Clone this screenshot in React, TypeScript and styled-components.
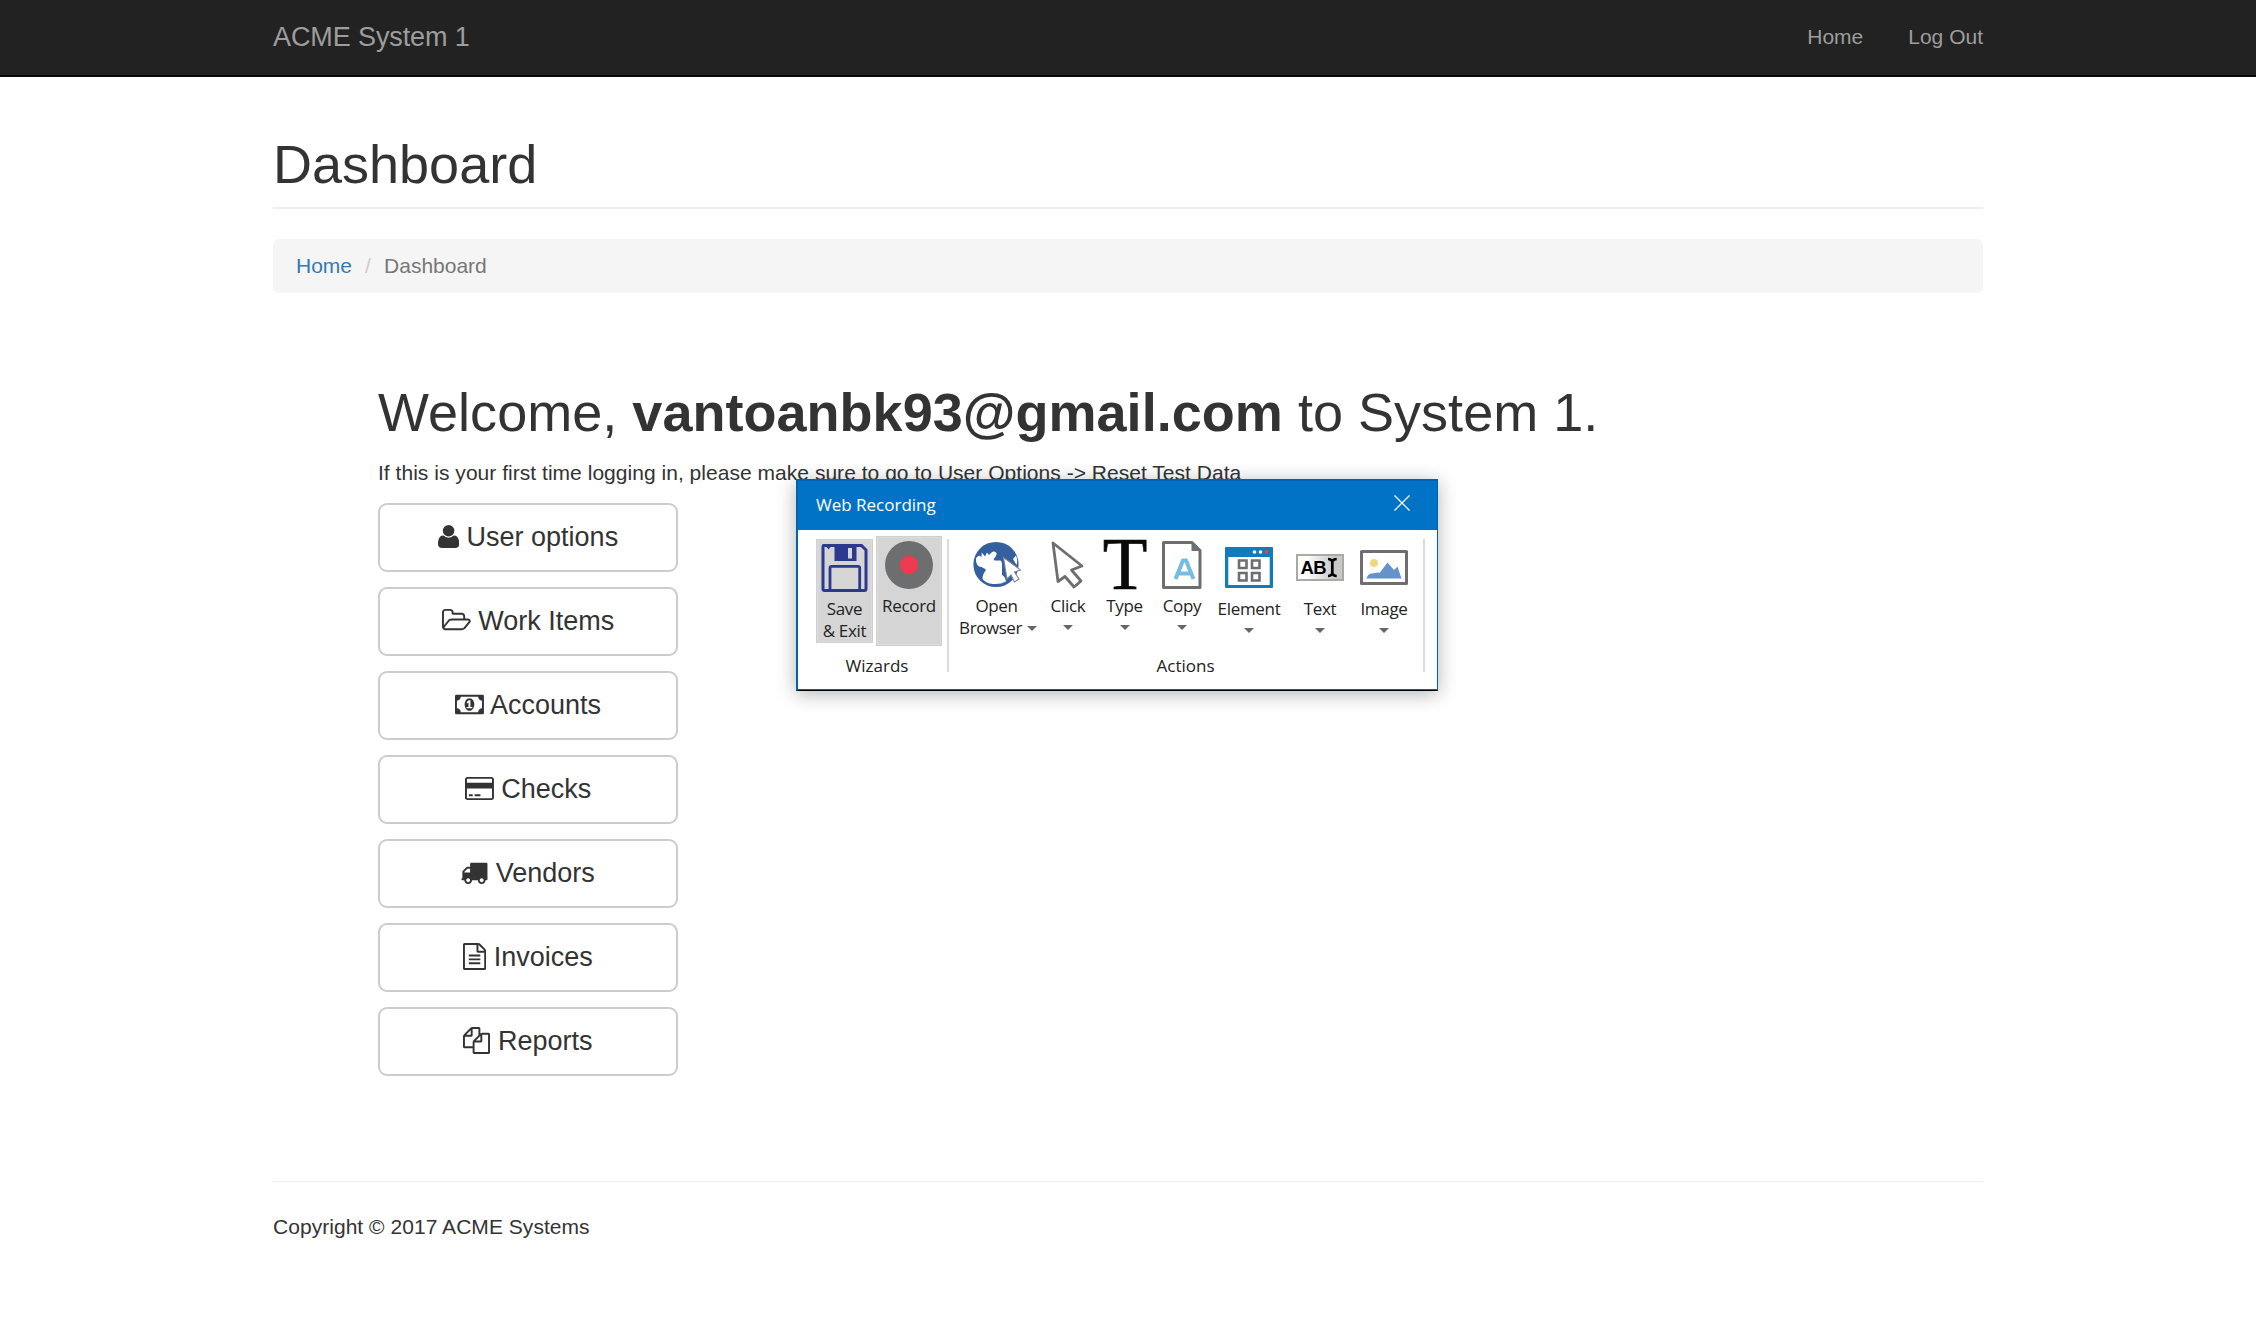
import React from "react";
import styled, { createGlobalStyle } from "styled-components";

const GlobalStyle = createGlobalStyle`
  * { box-sizing: border-box; }
  body {
    margin: 0;
    background: #fff;
    color: #333;
    font-family: "Liberation Sans", Arial, sans-serif;
    font-size: 21px;
    line-height: 30px;
  }
  a { text-decoration: none; color: inherit; }
`;

const Page = styled.div`
  position: relative;
  min-height: 1334px;
  overflow: hidden;
`;

const Container = styled.div`
  width: 1710px;
  margin: 0 auto;
`;

const Navbar = styled.nav`
  height: 77px;
  background: #222;
  border-bottom: 2px solid #080808;
  color: #9d9d9d;
`;

const NavInner = styled(Container)`
  display: flex;
  justify-content: space-between;
  height: 75px;
  padding-top: 22px;
`;

const Brand = styled.a`
  font-size: 27px;
  letter-spacing: -0.1px;
`;

const NavLinks = styled.div`
  display: flex;
  gap: 45px;
`;

const PageTitle = styled.h1`
  height: 75px;
  margin: 57px 0 30px;
  padding: 0 0 13px;
  font-size: 54px;
  font-weight: 400;
  line-height: 60px;
  border-bottom: 2px solid #eee;
`;

const Breadcrumb = styled.ol`
  display: flex;
  align-items: center;
  height: 54px;
  margin: 0;
  padding: 0 23px;
  list-style: none;
  background: #f5f5f5;
  border-radius: 6px;
`;

const Crumb = styled.li<{ $active?: boolean }>`
  color: ${(p) => (p.$active ? "#777" : "#337ab7")};
`;

const Slash = styled.li`
  width: 32px;
  padding-left: 13px;
  color: #ccc;
`;

const Main = styled.main`
  padding: 89px 105px 0;
`;

const Welcome = styled.h1`
  margin: 0;
  font-size: 54px;
  font-weight: 400;
  line-height: 60px;
  letter-spacing: 0.03px;
`;

const Hint = styled.p`
  height: 30px;
  margin: 16px 0 15px;
  letter-spacing: 0.03px;
`;

const Menu = styled.div`
  display: flex;
  flex-direction: column;
  gap: 15px;
  width: 300px;
`;

const MenuButton = styled.a`
  height: 69px;
  padding: 14px 0;
  border: 2px solid #ccc;
  border-radius: 9px;
  font-size: 27px;
  line-height: 36px;
  text-align: center;
`;

const Glyph = styled.svg`
  height: 27px;
  vertical-align: -4px;
  fill: currentColor;
`;

const Footer = styled.footer`
  margin-top: 105px;
  padding-top: 30px;
  border-top: 1px solid #eee;
  letter-spacing: 0.04px;
`;

const Dialog = styled.section`
  position: absolute;
  left: 796px;
  top: 479px;
  width: 642px;
  height: 212px;
  background: #fff;
  border: 2px solid #0063b1;
  border-right-width: 1px;
  border-bottom: 1px solid #000;
  box-shadow: 0 3px 18px rgba(0, 0, 0, 0.3), inset 0 -1px 0 #0063b1;
  font-family: "Open Sans", "Segoe UI", sans-serif;
  font-size: 17px;
  line-height: 22px;
  letter-spacing: -0.3px;
  color: #222;
`;

const TitleBar = styled.header`
  display: flex;
  justify-content: space-between;
  align-items: flex-start;
  height: 49px;
  padding: 13px 27px 0 18px;
  background: #0173c7;
  color: #fff;
  letter-spacing: 0;
`;

const CloseIcon = styled.svg`
  width: 16px;
  height: 16px;
  margin-top: 1px;
`;

const Ribbon = styled.div`
  display: flex;
  padding-top: 6px;
`;

const Group = styled.div<{ $width: number; $left: number }>`
  width: ${(p) => p.$width}px;
  padding-left: ${(p) => p.$left}px;
`;

const Tools = styled.div<{ $gap?: number }>`
  display: flex;
  gap: ${(p) => p.$gap ?? 0}px;
  height: 119px;
`;

const GroupLabel = styled.div`
  padding-right: 9px;
  text-align: center;
  letter-spacing: 0;
`;

const Divider = styled.div`
  width: 2px;
  height: 133px;
  margin-top: 3px;
  background: #dcdcdc;
`;

const Tool = styled.div<{ $width: number; $low?: boolean; $tile?: number }>`
  display: flex;
  flex-direction: column;
  align-items: center;
  flex: none;
  width: ${(p) => p.$width}px;
  height: ${(p) => (p.$tile ? p.$tile + "px" : "auto")};
  margin-top: ${(p) => (p.$low ? 3 : 0)}px;
  padding-top: 5px;
  background: ${(p) => (p.$tile ? "#d5d5d5" : "transparent")};
  box-shadow: ${(p) => (p.$tile ? "inset 0 0 0 1px #cfcfcf, inset 0 0 0 2px #dcdcdc" : "none")};
`;

const ToolIcon = styled.svg`
  width: 48px;
  height: 48px;
  margin-bottom: 6px;
  overflow: visible;
`;

const ToolLabel = styled.div<{ $tight?: boolean }>`
  white-space: nowrap;
  text-align: center;
  letter-spacing: ${(p) => (p.$tight ? "-0.45px" : "inherit")};
`;

const Caret = styled.span<{ $inline?: boolean }>`
  display: ${(p) => (p.$inline ? "inline-block" : "block")};
  margin: ${(p) => (p.$inline ? "0 -3px 3px 5px" : "8px 0 0")};
  border: 5px solid transparent;
  border-top-color: #666;
  border-bottom-width: 0;
`;

const glyphs = {
  user: { box: "192 0 1408 1792", w: 1408, d: "M1600 1405q0 120-73 189.5t-194 69.5h-874q-121 0-194-69.5t-73-189.5q0-53 3.5-103.5t14-109 26.5-108.5 43-97.5 62-81 85.5-53.5 111.5-20q9 0 42 21.5t74.5 48 108 48 133.5 21.5 133.5-21.5 108-48 74.5-48 42-21.5q61 0 111.5 20t85.5 53.5 62 81 43 97.5 26.5 108.5 14 109 3.5 103.5zm-320-893q0 159-112.5 271.5t-271.5 112.5-271.5-112.5-112.5-271.5 112.5-271.5 271.5-112.5 271.5 112.5 112.5 271.5z" },
  folder: { box: "64 0 1920 1792", w: 1920, d: "M1845 931q0-35-53-35h-1088q-40 0-85.5 21.5t-71.5 52.5l-294 363q-18 24-18 40 0 35 53 35h1088q40 0 86-22t71-53l294-363q18-22 18-39zm-1141-163h768v-160q0-40-28-68t-68-28h-576q-40 0-68-28t-28-68v-64q0-40-28-68t-68-28h-320q-40 0-68 28t-28 68v853l256-315q44-53 116-87.5t140-34.5zm1269 163q0 62-46 120l-295 363q-43 53-116 87.5t-140 34.5h-1088q-92 0-158-66t-66-158v-960q0-92 66-158t158-66h320q92 0 158 66t66 158v32h544q92 0 158 66t66 158v160h192q54 0 99 24.5t67 70.5q15 32 15 68z" },
  money: { box: "64 0 1920 1792", w: 1920, d: "M832 1152h384v-96h-128v-448h-114l-148 137 77 80q42-37 55-57h2v288h-128v96zm512-256q0 70-21 142t-59.5 134-101.5 101-138 39-138-39-101.5-101-59.5-134-21-142 21-142 59.5-134 101.5-101 138-39 138 39 101.5 101 59.5 134 21 142zm512 256v-512q-106 0-181-75t-75-181h-1152q0 106-75 181t-181 75v512q106 0 181 75t75 181h1152q0-106 75-181t181-75zm128-832v1152q0 26-19 45t-45 19h-1792q-26 0-45-19t-19-45v-1152q0-26 19-45t45-19h1792q26 0 45 19t19 45z" },
  card: { box: "0 0 1920 1792", w: 1920, d: "M1760 128q66 0 113 47t47 113v1216q0 66-47 113t-113 47h-1600q-66 0-113-47t-47-113v-1216q0-66 47-113t113-47h1600zm-1600 128q-13 0-22.5 9.5t-9.5 22.5v224h1664v-224q0-13-9.5-22.5t-22.5-9.5h-1600zm1600 1280q13 0 22.5-9.5t9.5-22.5v-608h-1664v608q0 13 9.5 22.5t22.5 9.5h1600zm-1504-128v-128h256v128h-256zm384 0v-128h384v128h-384z" },
  truck: { box: "36 0 1792 1792", w: 1792, d: "M640 1408q0-52-38-90t-90-38-90 38-38 90 38 90 90 38 90-38 38-90zm-384-512h384v-256h-158q-13 0-22 9l-195 195q-9 9-9 22v30zm1280 512q0-52-38-90t-90-38-90 38-38 90 38 90 90 38 90-38 38-90zm256-1088v1024q0 15-4 26.5t-13.5 18.5-16.5 11.5-23.5 6-22.5 2-25.5 0-22.5-.5q0 106-75 181t-181 75-181-75-75-181h-384q0 106-75 181t-181 75-181-75-75-181h-64q-3 0-22.5.5t-25.5 0-22.5-2-23.5-6-16.5-11.5-13.5-18.5-4-26.5q0-26 19-45t45-19v-320q0-8-.5-35t0-38 2.5-34.5 6.5-37 14-30.5 22.5-30l198-198q19-19 50.5-32t58.5-13h160v-192q0-26 19-45t45-19h1024q26 0 45 19t19 45z" },
  invoice: { box: "128 0 1536 1792", w: 1536, d: "M1596 380q28 28 48 76t20 88v1152q0 40-28 68t-68 28h-1344q-40 0-68-28t-28-68v-1600q0-40 28-68t68-28h896q40 0 88 20t76 48zm-444-244v376h376q-10-29-22-41l-313-313q-12-12-41-22zm384 1528v-1024h-416q-40 0-68-28t-28-68v-416h-768v1536h1280zm-1024-864q0-14 9-23t23-9h704q14 0 23 9t9 23v64q0 14-9 23t-23 9h-704q-14 0-23-9t-9-23v-64zm736 224q14 0 23 9t9 23v64q0 14-9 23t-23 9h-704q-14 0-23-9t-9-23v-64q0-14 9-23t23-9h704zm0 256q14 0 23 9t9 23v64q0 14-9 23t-23 9h-704q-14 0-23-9t-9-23v-64q0-14 9-23t23-9h704z" },
  files: { box: "0 0 1792 1792", w: 1792, d: "M1696 384q40 0 68 28t28 68v1216q0 40-28 68t-68 28h-960q-40 0-68-28t-28-68v-288h-544q-40 0-68-28t-28-68v-672q0-40 20-88t48-76l408-408q28-28 76-48t88-20h416q40 0 68 28t28 68v328q68-40 128-40h416zm-544 213l-299 299h299v-299zm-640-384l-299 299h299v-299zm196 647l316-316v-416h-384v416q0 40-28 68t-68 28h-416v640h512v-256q0-40 20-88t48-76zm956 804v-1152h-384v416q0 40-28 68t-68 28h-416v640h896z" },
};

const menu: { icon: keyof typeof glyphs; label: string }[] = [
  { icon: "user", label: "User options" },
  { icon: "folder", label: "Work Items" },
  { icon: "money", label: "Accounts" },
  { icon: "card", label: "Checks" },
  { icon: "truck", label: "Vendors" },
  { icon: "invoice", label: "Invoices" },
  { icon: "files", label: "Reports" },
];

const SaveIcon = () => (
  <ToolIcon viewBox="0.5 0 48 48">
    <path d="M3 1.500H41L45.500 6V45Q45.500 46.500 44 46.500H4Q2.500 46.500 2.500 45V3Q2.500 1.500 3 1.500Z" fill="none" stroke="#2b3990" strokeWidth="3" />
    <path d="M14 1H36V17H14Z" fill="#2b3990" />
    <rect x="27.500" y="4" width="4" height="10.500" fill="#d5d5d5" />
    <path d="M9.500 47V24Q9.500 22.300 11.200 22.300H37.500Q39.200 22.300 39.200 24V47" fill="none" stroke="#2b3990" strokeWidth="2.800" />
    <path d="M6 3L8 5.500L10 3Z" fill="#2b3990" />
  </ToolIcon>
);

const RecordIcon = () => (
  <ToolIcon viewBox="0 0 48 48">
    <circle cx="24" cy="24" r="24" fill="#6d6e70" />
    <circle cx="24" cy="24" r="9.200" fill="#ee3950" />
  </ToolIcon>
);

const BrowserIcon = () => (
  <ToolIcon viewBox="0 0 48 48">
    <circle cx="23" cy="23.500" r="22.600" fill="#355f9f" />
    <path d="M3 17L6 14.500L8.500 16L8.700 11.500L12 15.500L14 11.500L16 14L18.500 11.500Q21 9.500 23.500 12Q24 15 20.500 18L21.500 19.500H27.500Q29 20.500 29 23V34Q31 35 32 37L33 40.500Q28 43.500 20 43Q13 42.500 9.500 38Q9.500 33 13 29Q11 26.500 6 25.500Q2.500 23 3 17Z" fill="#fff" />
    <path d="M40 18L43 14.500Q45 19 43.500 24Z" fill="#fff" />
    <path d="M30.500 16.500L47.500 29L41.500 31L46 38L41.500 41L38 34L34 38Z" fill="#fff" stroke="#7d8591" strokeWidth="1.100" />
  </ToolIcon>
);

const ClickIcon = () => (
  <ToolIcon viewBox="0 0 48 48">
    <path d="M9 2L38 25L27.500 29L37 40L30 46L21 35.500L14 40.500Z" fill="#fff" stroke="#6d6e70" strokeWidth="2.800" strokeLinejoin="round" />
  </ToolIcon>
);

const TypeIcon = () => (
  <ToolIcon viewBox="0 0 48 48">
    <text x="24" y="48" textAnchor="middle" fontFamily="Liberation Serif, Times New Roman, serif" fontSize="73" letterSpacing="0" fill="#0a0a0a" stroke="#0a0a0a" strokeWidth="0.700">T</text>
  </ToolIcon>
);

const CopyIcon = () => (
  <ToolIcon viewBox="0.5 0 48 48">
    <path d="M6 1.500H34.500L42.500 9.500V46.500H6Z" fill="#fff" stroke="#6d6e70" strokeWidth="3" strokeLinejoin="round" />
    <path d="M34 1V10H43Z" fill="#6d6e70" />
    <path d="M18 38L25.500 19.500H28.500L36 38M20.500 32.500H33.500" fill="none" stroke="#77bce3" strokeWidth="4" />
  </ToolIcon>
);

const ElementIcon = () => (
  <ToolIcon viewBox="0 0 48 48">
    <rect x="0" y="3" width="48" height="41" rx="1" fill="#117cbd" />
    <rect x="3.300" y="13" width="41.400" height="28" fill="#fff" />
    <circle cx="29.500" cy="8" r="1.800" fill="#fff" />
    <circle cx="35.500" cy="8" r="1.800" fill="#fff" />
    <circle cx="41.500" cy="8" r="1.900" fill="#ee3950" />
    <path d="M14 16.500H21.500V24H14ZM27 16.500H34.500V24H27ZM14 29H21.500V36.500H14ZM27 29H34.500V36.500H27Z" fill="#fff" stroke="#6d6e70" strokeWidth="2.600" />
  </ToolIcon>
);

const TextIcon = () => (
  <ToolIcon viewBox="0 0 48 48">
    <defs>
      <linearGradient id="field" x1="0" x2="1">
        <stop offset="0.200" stopColor="#fff" />
        <stop offset="0.800" stopColor="#c9c9cb" />
      </linearGradient>
    </defs>
    <rect x="1" y="11" width="46" height="25" fill="url(#field)" stroke="#a9aaa2" strokeWidth="2" />
    <text x="4.500" y="30.300" fontFamily="Liberation Sans, Arial, sans-serif" fontSize="18.500" fontWeight="700" letterSpacing="-0.700" fill="#000">AB</text>
    <path d="M32 15Q35 15 36.300 17.500Q37.500 15 40.700 15M32 32Q35 32 36.300 29.500Q37.500 32 40.700 32M36.300 16V31" fill="none" stroke="#000" strokeWidth="2.700" />
  </ToolIcon>
);

const ImageIcon = () => (
  <ToolIcon viewBox="0 0 48 48">
    <rect x="1.500" y="7.500" width="45" height="32" fill="#fff" stroke="#6d6e70" strokeWidth="3" strokeLinejoin="round" />
    <circle cx="14" cy="19" r="4" fill="#eed87a" />
    <path d="M6.500 34.500Q8 29.500 12 29.500Q17 28.500 20 28.500L27.500 18.500L34 26L37.500 22.500L41.500 34.500Z" fill="#6692cc" />
  </ToolIcon>
);

export default function App() {
  return (
    <Page>
      <GlobalStyle />
      <Navbar>
        <NavInner>
          <Brand href="#">ACME System 1</Brand>
          <NavLinks>
            <a href="#">Home</a>
            <a href="#">Log Out</a>
          </NavLinks>
        </NavInner>
      </Navbar>
      <Container>
        <PageTitle>Dashboard</PageTitle>
        <Breadcrumb>
          <Crumb><a href="#">Home</a></Crumb>
          <Slash>/</Slash>
          <Crumb $active>Dashboard</Crumb>
        </Breadcrumb>
        <Main>
          <Welcome>Welcome, <b>vantoanbk93@gmail.com</b> to System 1.</Welcome>
          <Hint>If this is your first time logging in, please make sure to go to User Options -&gt; Reset Test Data</Hint>
          <Menu>
            {menu.map(({ icon, label }) => (
              <MenuButton href="#" key={label}>
                <Glyph viewBox={glyphs[icon].box} width={(glyphs[icon].w / 1792) * 27}>
                  <path d={glyphs[icon].d} />
                </Glyph>{" "}
                {label}
              </MenuButton>
            ))}
          </Menu>
        </Main>
        <Footer>Copyright © 2017 ACME Systems</Footer>
      </Container>

      <Dialog>
        <TitleBar>
          <span>Web Recording</span>
          <CloseIcon viewBox="0 0 16 16">
            <path d="M0.500 0.500L15.500 15.500M15.500 0.500L0.500 15.500" stroke="#fff" strokeWidth="1.300" />
          </CloseIcon>
        </TitleBar>
        <Ribbon>
          <Group $width={149} $left={18}>
            <Tools $gap={3}>
              <Tool $width={57} $low $tile={104}>
                <SaveIcon />
                <ToolLabel>Save<br />&amp; Exit</ToolLabel>
              </Tool>
              <Tool $width={66} $tile={110}>
                <RecordIcon />
                <ToolLabel>Record</ToolLabel>
              </Tool>
            </Tools>
            <GroupLabel>Wizards</GroupLabel>
          </Group>
          <Divider />
          <Group $width={474} $left={8}>
            <Tools>
              <Tool $width={79}>
                <BrowserIcon />
                <ToolLabel $tight>Open<br />Browser<Caret $inline /></ToolLabel>
              </Tool>
              <Tool $width={64}><ClickIcon /><ToolLabel>Click</ToolLabel><Caret /></Tool>
              <Tool $width={49}><TypeIcon /><ToolLabel>Type</ToolLabel><Caret /></Tool>
              <Tool $width={66}><CopyIcon /><ToolLabel>Copy</ToolLabel><Caret /></Tool>
              <Tool $width={68} $low><ElementIcon /><ToolLabel>Element</ToolLabel><Caret /></Tool>
              <Tool $width={74} $low><TextIcon /><ToolLabel>Text</ToolLabel><Caret /></Tool>
              <Tool $width={54} $low><ImageIcon /><ToolLabel>Image</ToolLabel><Caret /></Tool>
            </Tools>
            <GroupLabel>Actions</GroupLabel>
          </Group>
          <Divider />
        </Ribbon>
      </Dialog>
    </Page>
  );
}
